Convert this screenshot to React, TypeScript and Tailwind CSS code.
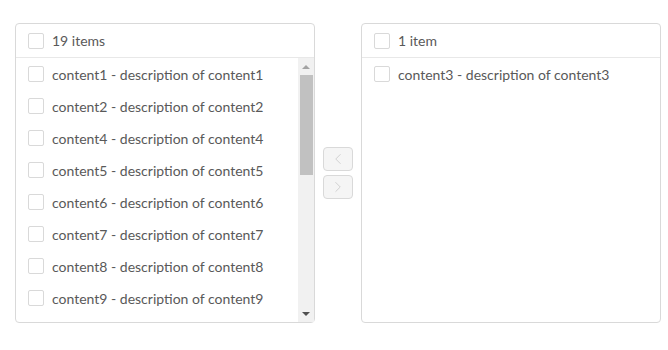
import { ChevronLeft, ChevronRight } from "lucide-react";

const leftItems = [1, 2, 4, 5, 6, 7, 8, 9];

function Checkbox() {
  return <span className="size-4 shrink-0 rounded-[2px] border border-[#d9d9d9] bg-white" />;
}

function Row({ n }: { n: number }) {
  return (
    <li className="flex h-8 items-center gap-2 px-3">
      <Checkbox />
      <span className="whitespace-nowrap">
        content{n} - description of content{n}
      </span>
    </li>
  );
}

function Header({ label }: { label: string }) {
  return (
    <div className="flex h-[34px] shrink-0 items-center gap-2 border-b border-[#e8e8e8] px-3">
      <Checkbox />
      <span>{label}</span>
    </div>
  );
}

function FakeScrollbar() {
  return (
    <div className="flex w-4 shrink-0 flex-col items-center bg-[#f1f1f1]">
      <div className="flex h-[17px] w-full items-center justify-center">
        <span className="h-0 w-0 border-x-[4px] border-b-[4px] border-x-transparent border-b-[#a3a3a3]" />
      </div>
      <div className="h-[100px] w-[13px] bg-[#c1c1c1]" />
      <div className="flex-1" />
      <div className="flex h-[17px] w-full items-center justify-center">
        <span className="h-0 w-0 border-x-[4px] border-t-[4px] border-x-transparent border-t-[#505050]" />
      </div>
    </div>
  );
}

export default function App() {
  return (
    <div
      className="h-[350px] w-[668px] bg-white pl-[15px] pt-[23px] text-[14px] text-[#595959]"
      style={{ fontFamily: "Lato, 'Noto Sans', sans-serif" }}
    >
      <div className="flex items-center">
        <div className="flex h-[300px] w-[300px] flex-col rounded-[4px] border border-[#d9d9d9]">
          <Header label="19 items" />
          <div className="flex min-h-0 flex-1">
            <ul className="flex-1 overflow-hidden">
              {leftItems.map((n) => (
                <Row key={n} n={n} />
              ))}
            </ul>
            <FakeScrollbar />
          </div>
        </div>

        <div className="mx-2 flex flex-col gap-1">
          <button className="flex h-6 w-[30px] items-center justify-center rounded-[4px] border border-[#d9d9d9] bg-[#f5f5f5] text-[#c4c4c4]">
            <ChevronLeft className="size-[18px]" strokeWidth={1} />
          </button>
          <button className="flex h-6 w-[30px] items-center justify-center rounded-[4px] border border-[#d9d9d9] bg-[#f5f5f5] text-[#c4c4c4]">
            <ChevronRight className="size-[18px]" strokeWidth={1} />
          </button>
        </div>

        <div className="flex h-[300px] w-[300px] flex-col rounded-[4px] border border-[#d9d9d9]">
          <Header label="1 item" />
          <ul className="flex-1">
            <Row n={3} />
          </ul>
        </div>
      </div>
    </div>
  );
}
